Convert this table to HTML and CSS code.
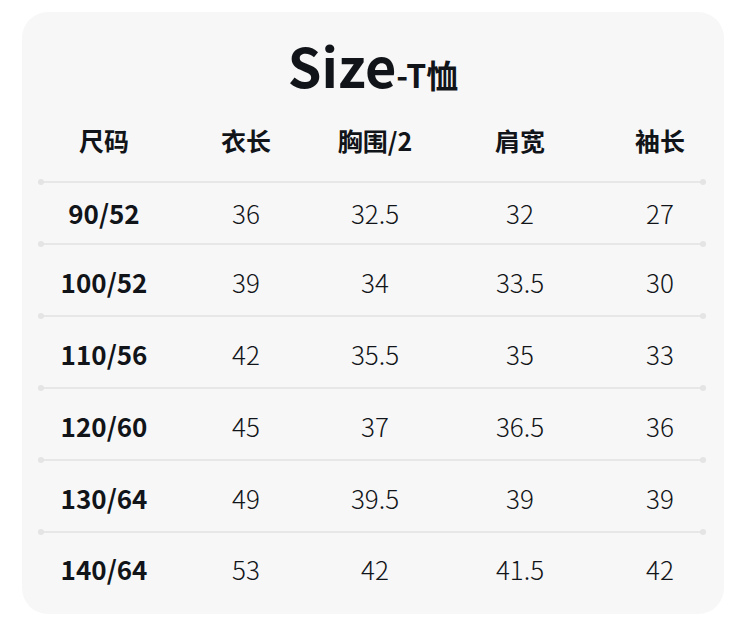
FILE: index.html
```html
<!DOCTYPE html>
<html lang="zh-CN">
<head>
<meta charset="utf-8">
<title>Size-T恤</title>
<link rel="stylesheet" href="styles.css">
</head>
<body>
<div class="card">
  <h1 class="title"><span class="title-main">Size</span><span class="title-sub">-T恤</span></h1>
  <div class="row head">
    <div>尺码</div><div>衣长</div><div>胸围/2</div><div>肩宽</div><div>袖长</div>
  </div>
  <div class="sep"></div>
  <div class="row first">
    <div class="label">90/52</div><div>36</div><div>32.5</div><div>32</div><div>27</div>
  </div>
  <div class="sep"></div>
  <div class="row">
    <div class="label">100/52</div><div>39</div><div>34</div><div>33.5</div><div>30</div>
  </div>
  <div class="sep"></div>
  <div class="row">
    <div class="label">110/56</div><div>42</div><div>35.5</div><div>35</div><div>33</div>
  </div>
  <div class="sep"></div>
  <div class="row">
    <div class="label">120/60</div><div>45</div><div>37</div><div>36.5</div><div>36</div>
  </div>
  <div class="sep"></div>
  <div class="row">
    <div class="label">130/64</div><div>49</div><div>39.5</div><div>39</div><div>39</div>
  </div>
  <div class="sep"></div>
  <div class="row last">
    <div class="label">140/64</div><div>53</div><div>42</div><div>41.5</div><div>42</div>
  </div>
</div>
</body>
</html>
```
FILE: styles.css
```css
* { box-sizing: border-box; }
html, body {
  margin: 0;
  padding: 0;
  background: #ffffff;
}
body {
  font-family: "Noto Sans CJK SC", "Noto Sans", sans-serif;
  color: #111418;
}
.card {
  margin: 12px 0 0 22px;
  width: 702px;
  height: 602px;
  background: #f7f7f7;
  border-radius: 26px;
  padding-top: 25px;
}
.title {
  margin: 0;
  text-align: center;
  line-height: 55px;
  height: 55px;
  font-weight: 700;
  white-space: nowrap;
}
.title-main {
  font-size: 54px;
}
.title-sub {
  font-size: 32px;
}
.row {
  display: grid;
  grid-template-columns: 164px 120px 138px 152px 128px;
  align-items: center;
  height: 66px;
  padding-top: 4px;
  font-size: 26px;
  line-height: 1;
  font-weight: 300;
}
.row > div {
  text-align: center;
  white-space: nowrap;
}
.row.head {
  height: 87px;
  padding-top: 9px;
  font-size: 25px;
  font-weight: 700;
}
.row.first { height: 56px; padding-top: 0; }
.row.last { height: 68px; padding-top: 0; }
.row .label { font-weight: 700; }
.sep {
  height: 6px;
  margin: 0 18px 0 16px;
  display: flex;
  justify-content: space-between;
  align-items: center;
  background: linear-gradient(#e7e7e7, #e7e7e7) center / 100% 2px no-repeat;
}
.sep::before,
.sep::after {
  content: "";
  width: 6px;
  height: 6px;
  border-radius: 50%;
  background: #e4e4e4;
}
```
